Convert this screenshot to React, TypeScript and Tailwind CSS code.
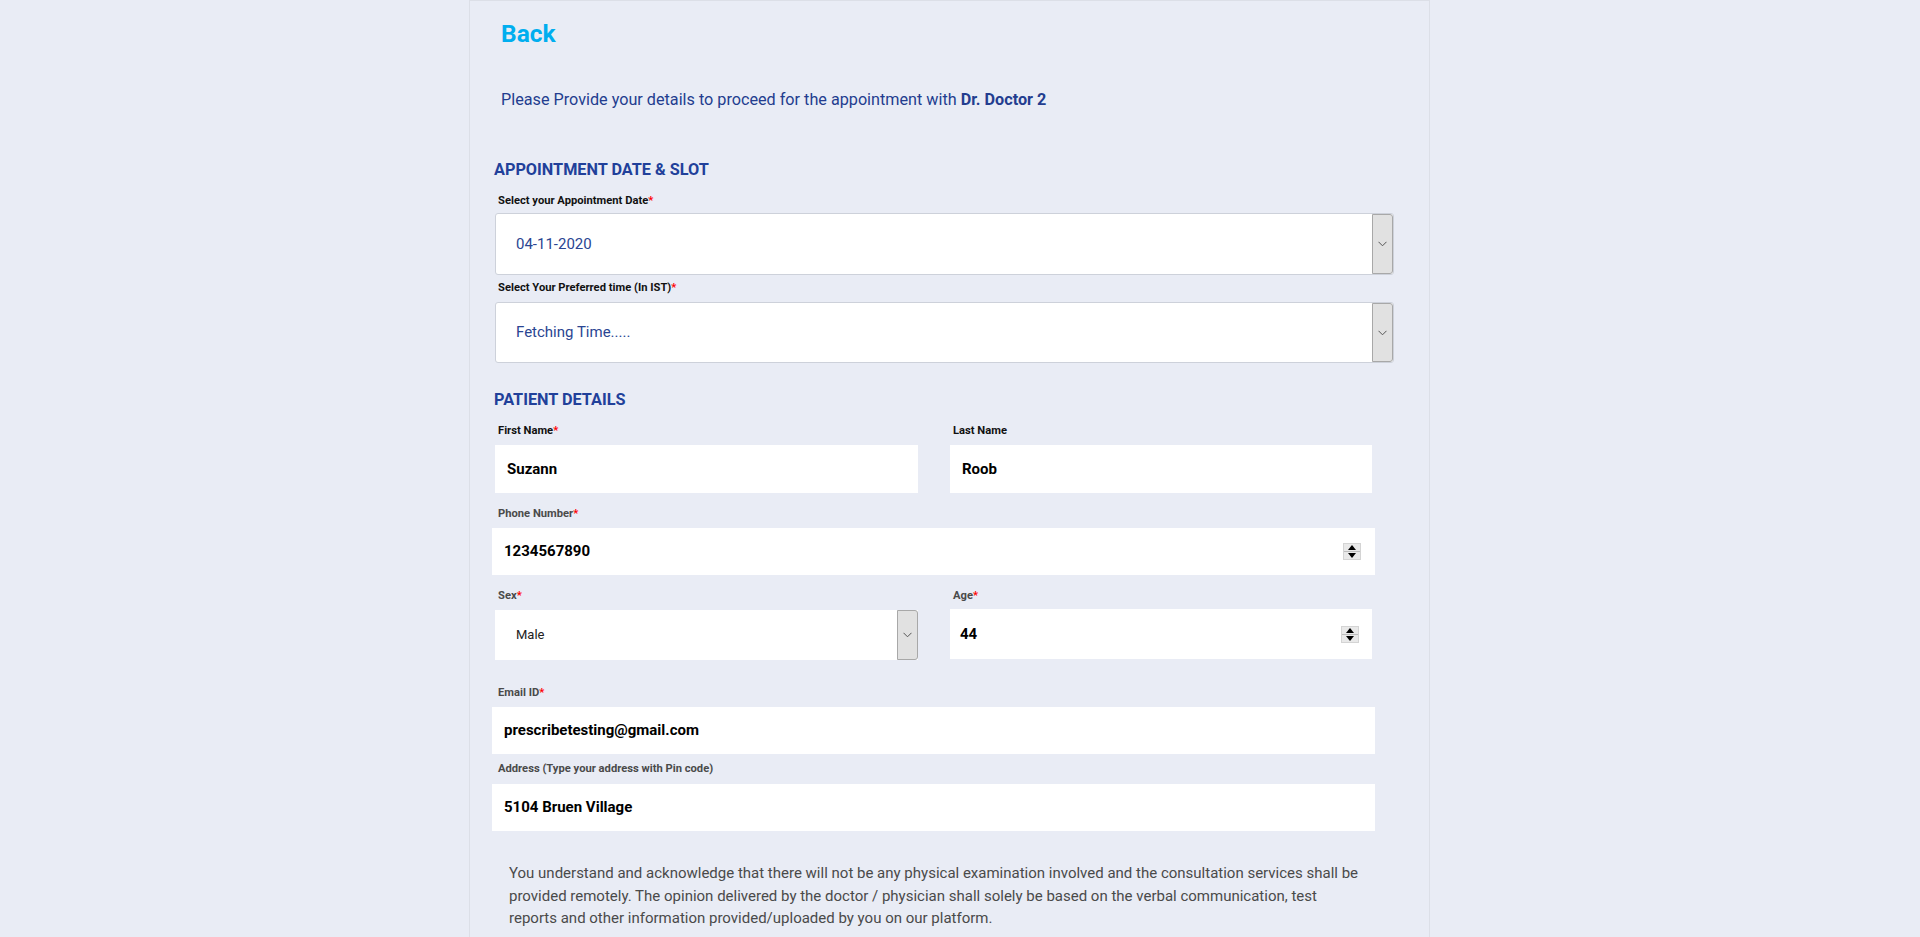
import React from 'react';

const Star = () => <span className="text-[#ff0000]">*</span>;

const Chevron = () => (
    <svg width="9" height="6" viewBox="0 0 9 6" fill="none">
        <path d="M0.5 0.8 L4.5 4.8 L8.5 0.8" stroke="#555" strokeWidth="1" />
    </svg>
);

const DropButton = ({ w = 'w-[21px]' }: { w?: string }) => (
    <div className={`${w} h-full shrink-0 bg-[#e1e1e1] border border-[#a8a8a8] rounded-r-[3px] flex items-center justify-center`}>
        <Chevron />
    </div>
);

const Spinner = () => (
    <div className="w-[18px] h-[17px] flex flex-col bg-[#e9e9e9] border border-[#d4d4d4]">
        <div className="flex-1 flex items-center justify-center border-b border-[#bdbdbd]">
            <div className="w-0 h-0 border-l-[4px] border-r-[4px] border-b-[5px] border-l-transparent border-r-transparent border-b-black" />
        </div>
        <div className="flex-1 flex items-center justify-center">
            <div className="w-0 h-0 border-l-[4px] border-r-[4px] border-t-[5px] border-l-transparent border-r-transparent border-t-black" />
        </div>
    </div>
);

const Label = ({ children, gray }: { children: React.ReactNode; gray?: boolean }) => (
    <div className={`h-[14px] leading-[14px] text-[11.2px] font-bold ${gray ? 'text-[#4a4a4a]' : 'text-[#111]'}`}>
        {children}
    </div>
);

export default function App() {
    return (
        <div className="min-h-[937px] bg-[#e9ecf5] font-['Roboto','Liberation_Sans',sans-serif]">
            <div className="ml-[469px] w-[961px] min-h-[937px] border-x border-t border-[#dcdfe7] bg-[#e9ecf5]">
                {/* Back */}
                <div className="pt-[18px] pl-[31px]">
                    <span className="block h-[30px] leading-[30px] text-[24.5px] font-bold text-[#00aeef]">Back</span>
                </div>

                <p className="mt-[41px] pl-[31px] h-[20px] leading-[20px] text-[16.2px] text-[#233d8f]">
                    Please Provide your details to proceed for the appointment with <span className="font-bold">Dr. Doctor 2</span>
                </p>

                {/* Appointment date & slot */}
                <h2 className="mt-[50px] pl-[24px] h-[20px] leading-[20px] text-[16.25px] font-bold text-[#21409a]">
                    APPOINTMENT DATE &amp; SLOT
                </h2>

                <div className="pl-[25px] w-[924px]">
                    <div className="mt-[14px] pl-[3px]">
                        <Label>Select your Appointment Date<Star /></Label>
                    </div>
                    <div className="mt-[5px] h-[62px] flex bg-white border border-[#cdd1da] rounded-[3px]">
                        <div className="flex-1 flex items-center pl-[20px] text-[15px] text-[#2a4592]">04-11-2020</div>
                        <DropButton />
                    </div>

                    <div className="mt-[6px] pl-[3px]">
                        <Label>Select Your Preferred time (In IST)<Star /></Label>
                    </div>
                    <div className="mt-[7px] h-[61px] flex bg-white border border-[#cdd1da] rounded-[3px]">
                        <div className="flex-1 flex items-center pl-[20px] text-[15px] text-[#2a4592]">Fetching Time.....</div>
                        <DropButton />
                    </div>
                </div>

                {/* Patient details */}
                <h2 className="mt-[27px] pl-[24px] h-[20px] leading-[20px] text-[16.25px] font-bold text-[#21409a]">
                    PATIENT DETAILS
                </h2>

                <div className="pl-[22px] w-[905px]">
                    <div className="mt-[14px] grid grid-cols-[423px_422px] gap-x-[32px] pl-[3px]">
                        <div>
                            <div className="pl-[3px]"><Label>First Name<Star /></Label></div>
                            <div className="mt-[7px] h-[48px] bg-white flex items-center pl-[12px] text-[15px] font-bold text-black">Suzann</div>
                        </div>
                        <div>
                            <div className="pl-[3px]"><Label>Last Name</Label></div>
                            <div className="mt-[7px] h-[48px] bg-white flex items-center pl-[12px] text-[15px] font-bold text-black">Roob</div>
                        </div>
                    </div>

                    <div className="mt-[14px] pl-[6px]">
                        <Label gray>Phone Number<Star /></Label>
                    </div>
                    <div className="mt-[7px] h-[47px] bg-white flex items-center justify-between pl-[12px] pr-[14px] text-[15px] font-bold text-black">
                        <span>1234567890</span>
                        <Spinner />
                    </div>

                    <div className="mt-[14px] grid grid-cols-[423px_422px] gap-x-[32px] pl-[3px]">
                        <div>
                            <div className="pl-[3px]"><Label gray>Sex<Star /></Label></div>
                            <div className="mt-[7px] h-[50px] bg-white flex">
                                <div className="flex-1 flex items-center pl-[21px] text-[13px] text-[#222]">Male</div>
                                <DropButton />
                            </div>
                        </div>
                        <div>
                            <div className="pl-[3px]"><Label gray>Age<Star /></Label></div>
                            <div className="mt-[6px] h-[50px] bg-white flex items-center justify-between pl-[10px] pr-[13px] text-[15px] font-bold text-black">
                                <span>44</span>
                                <Spinner />
                            </div>
                        </div>
                    </div>

                    <div className="mt-[26px] pl-[6px]">
                        <Label gray>Email ID<Star /></Label>
                    </div>
                    <div className="mt-[7px] h-[47px] bg-white flex items-center pl-[12px] text-[15px] font-bold text-black">
                        prescribetesting@gmail.com
                    </div>

                    <div className="mt-[8px] pl-[6px]">
                        <Label gray>Address (Type your address with Pin code)</Label>
                    </div>
                    <div className="mt-[8px] h-[47px] bg-white flex items-center pl-[12px] text-[15px] font-bold text-black">
                        5104 Bruen Village
                    </div>
                </div>

                {/* Disclaimer */}
                <p className="mt-[31px] ml-[39px] w-[858px] text-[15px] leading-[22.5px] text-[#4a4a4a]">
                    You understand and acknowledge that there will not be any physical examination involved and the consultation services shall be provided remotely. The opinion delivered by the doctor / physician shall solely be based on the verbal communication, test reports and other information provided/uploaded by you on our platform.
                </p>
            </div>
        </div>
    );
}
